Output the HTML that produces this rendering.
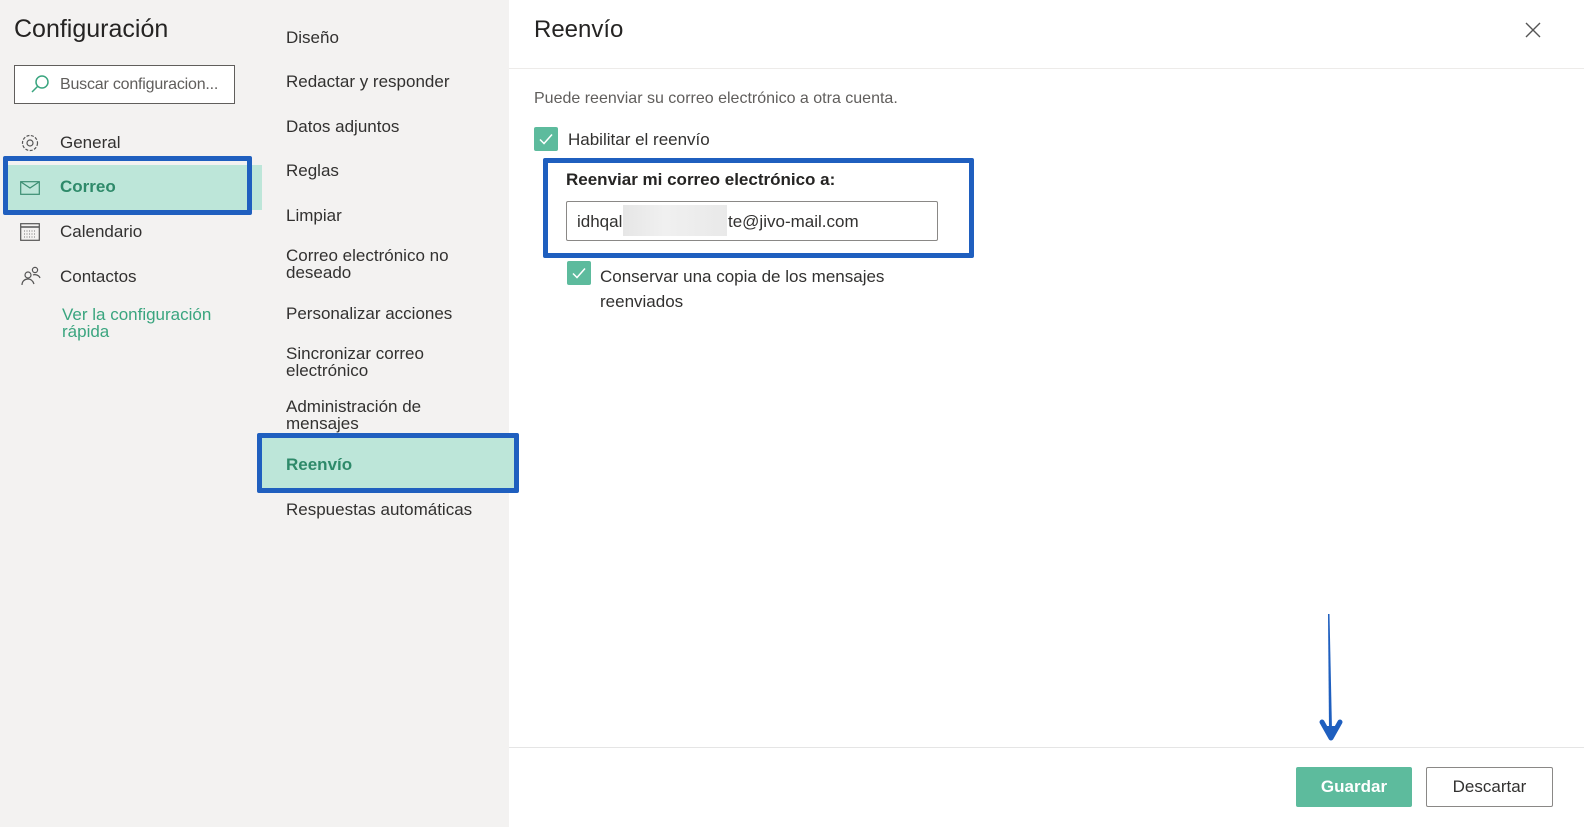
<!DOCTYPE html>
<html><head><meta charset="utf-8"><style>
body{margin:0;width:1584px;height:827px;position:relative;overflow:hidden;font-family:"Liberation Sans",sans-serif;color:#323130;background:#fff}
.a{position:absolute;white-space:nowrap}
.left{position:absolute;left:0;top:0;width:509px;height:827px;background:#f3f2f1}
.t16{font-size:17px}
</style></head><body>
<div class="left"></div>
<div class="a" style="left:14px;top:15px;font-size:25px;color:#252423">Configuración</div>
<div class="a" style="left:14px;top:65px;width:221px;height:39px;border:1px solid #605e5c;background:#fff;box-sizing:border-box"></div>
<svg class="a" style="left:29px;top:74px" width="22" height="22" viewBox="0 0 22 22"><circle cx="13" cy="8" r="6" fill="none" stroke="#3aa57f" stroke-width="1.5"/><path d="M8.5 12.5L3 18" stroke="#3aa57f" stroke-width="1.5"/></svg>
<div class="a" style="left:60px;top:76px;font-size:16px;color:#605e5c;letter-spacing:-0.2px">Buscar configuracion...</div>
<svg class="a" style="left:20px;top:133px" width="20" height="20" viewBox="0 0 20 20"><circle cx="10" cy="10" r="3" fill="none" stroke="#555" stroke-width="1.2"/><circle cx="10" cy="10" r="7.5" fill="none" stroke="#555" stroke-width="1.2" stroke-dasharray="3 1.5"/></svg>
<div class="a t16" style="left:60px;top:133px">General</div>
<div class="a" style="left:8px;top:165px;width:254px;height:45px;background:#bde6d9"></div>
<div class="a" style="left:3px;top:156px;width:249px;height:59px;border:5px solid #1f5fbf;box-sizing:border-box;border-radius:2px"></div>
<svg class="a" style="left:20px;top:181px" width="20" height="14" viewBox="0 0 20 14"><rect x="0.7" y="0.7" width="18.6" height="12.6" fill="none" stroke="#3b8e72" stroke-width="1.2"/><path d="M1 1l9 6 9-6" fill="none" stroke="#3b8e72" stroke-width="1.2"/></svg>
<div class="a t16" style="left:60px;top:177px;color:#2e8a6a;font-weight:bold">Correo</div>
<svg class="a" style="left:20px;top:223px" width="20" height="18" viewBox="0 0 20 18"><rect x="0.7" y="0.7" width="18.6" height="16.6" fill="none" stroke="#555" stroke-width="1.2"/><path d="M1 4h18" stroke="#555" stroke-width="1.5"/><path d="M4 8h12M4 11h12M4 14h12" stroke="#777" stroke-width="1" stroke-dasharray="1 1.5"/></svg>
<div class="a t16" style="left:60px;top:222px">Calendario</div>
<svg class="a" style="left:21px;top:266px" width="20" height="20" viewBox="0 0 20 20"><circle cx="7" cy="9" r="3" fill="none" stroke="#555" stroke-width="1.2"/><path d="M1 19c0-4 3-6 6-6s5 2 6 5" fill="none" stroke="#555" stroke-width="1.2"/><circle cx="14" cy="4" r="2.6" fill="none" stroke="#555" stroke-width="1.2"/><path d="M12 9c2-1 6 0 7 3" fill="none" stroke="#555" stroke-width="1.2"/></svg>
<div class="a t16" style="left:60px;top:267px">Contactos</div>
<div class="a t16" style="left:62px;top:306px;color:#3aa57f;line-height:17px">Ver la configuración<br>rápida</div>

<div class="a t16" style="left:286px;top:28px">Diseño</div>
<div class="a t16" style="left:286px;top:72px">Redactar y responder</div>
<div class="a t16" style="left:286px;top:117px">Datos adjuntos</div>
<div class="a t16" style="left:286px;top:161px">Reglas</div>
<div class="a t16" style="left:286px;top:206px">Limpiar</div>
<div class="a t16" style="left:286px;top:247px;line-height:17px">Correo electrónico no<br>deseado</div>
<div class="a t16" style="left:286px;top:304px">Personalizar acciones</div>
<div class="a t16" style="left:286px;top:345px;line-height:17px">Sincronizar correo<br>electrónico</div>
<div class="a t16" style="left:286px;top:398px;line-height:17px">Administración de<br>mensajes</div>
<div class="a" style="left:262px;top:438px;width:252px;height:50px;background:#bde6d9"></div>
<div class="a" style="left:257px;top:433px;width:262px;height:60px;border:5px solid #1f5fbf;box-sizing:border-box;border-radius:2px"></div>
<div class="a t16" style="left:286px;top:455px;color:#2e8a6a;font-weight:bold">Reenvío</div>
<div class="a t16" style="left:286px;top:500px">Respuestas automáticas</div>

<div class="a" style="left:534px;top:16px;font-size:24px;color:#252423">Reenvío</div>
<svg class="a" style="left:1524px;top:21px" width="18" height="18" viewBox="0 0 18 18"><path d="M2 2l14 14M16 2L2 16" stroke="#555" stroke-width="1.4"/></svg>
<div class="a" style="left:509px;top:68px;width:1075px;height:1px;background:#edebe9"></div>
<div class="a" style="left:534px;top:90px;font-size:16px;color:#605e5c">Puede reenviar su correo electrónico a otra cuenta.</div>
<div class="a" style="left:534px;top:127px;width:24px;height:24px;background:#5dbb9d;border-radius:2px"></div>
<svg class="a" style="left:534px;top:127px" width="24" height="24" viewBox="0 0 24 24"><path d="M6 12.5l4 4 8-9" fill="none" stroke="#fff" stroke-width="1.5"/></svg>
<div class="a t16" style="left:568px;top:130px">Habilitar el reenvío</div>
<div class="a" style="left:543px;top:158px;width:431px;height:100px;border:5px solid #1f5fbf;box-sizing:border-box;border-radius:2px"></div>
<div class="a" style="left:566px;top:170px;font-size:17px;font-weight:bold;color:#252423">Reenviar mi correo electrónico a:</div>
<div class="a" style="left:566px;top:201px;width:372px;height:40px;border:1px solid #8a8886;box-sizing:border-box;border-radius:2px;background:#fff"></div>
<div class="a" style="left:623px;top:205px;width:104px;height:31px;background:linear-gradient(90deg,#e6e6e6,#f0f0f0 40%,#e9e9e9)"></div>
<div class="a t16" style="left:577px;top:212px">idhqal</div>
<div class="a t16" style="left:728px;top:212px">te@jivo-mail.com</div>
<div class="a" style="left:567px;top:261px;width:24px;height:24px;background:#5dbb9d;border-radius:2px"></div>
<svg class="a" style="left:567px;top:261px" width="24" height="24" viewBox="0 0 24 24"><path d="M6 12.5l4 4 8-9" fill="none" stroke="#fff" stroke-width="1.5"/></svg>
<div class="a t16" style="left:600px;top:264px;line-height:25px">Conservar una copia de los mensajes<br>reenviados</div>

<div class="a" style="left:509px;top:747px;width:1075px;height:1px;background:#e5e5e5"></div>
<svg class="a" style="left:1318px;top:612px" width="30" height="140" viewBox="0 0 30 140"><path d="M10 2L11.5 2 14 118 11 118Z" fill="#1f5fbf"/><path d="M4 110l9 16 9-16" fill="none" stroke="#1f5fbf" stroke-width="5" stroke-linecap="round" stroke-linejoin="round"/><path d="M7 114l6 12 6-12z" fill="#1f5fbf"/></svg>
<div class="a" style="left:1296px;top:767px;width:116px;height:40px;background:#5dbb9d;border-radius:2px;color:#fff;font-weight:bold;font-size:17px;text-align:center;line-height:40px">Guardar</div>
<div class="a" style="left:1426px;top:767px;width:127px;height:40px;border:1px solid #8a8886;box-sizing:border-box;border-radius:2px;font-size:17px;text-align:center;line-height:38px">Descartar</div>
</body></html>
